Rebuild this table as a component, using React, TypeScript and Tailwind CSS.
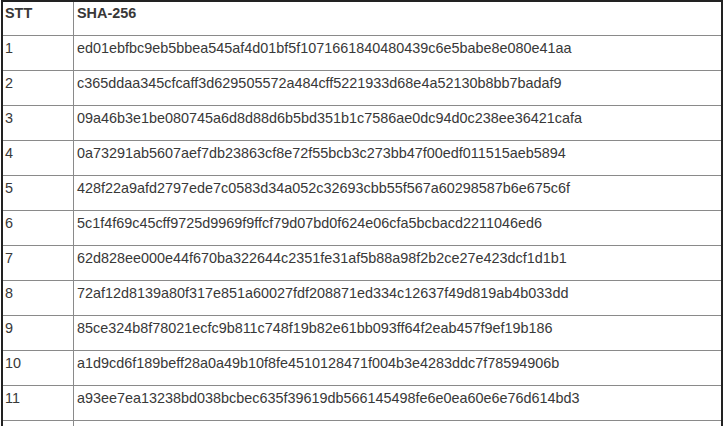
const rows: [string, string][] = [
  ['1', 'ed01ebfbc9eb5bbea545af4d01bf5f1071661840480439c6e5babe8e080e41aa'],
  ['2', 'c365ddaa345cfcaff3d629505572a484cff5221933d68e4a52130b8bb7badaf9'],
  ['3', '09a46b3e1be080745a6d8d88d6b5bd351b1c7586ae0dc94d0c238ee36421cafa'],
  ['4', '0a73291ab5607aef7db23863cf8e72f55bcb3c273bb47f00edf011515aeb5894'],
  ['5', '428f22a9afd2797ede7c0583d34a052c32693cbb55f567a60298587b6e675c6f'],
  ['6', '5c1f4f69c45cff9725d9969f9ffcf79d07bd0f624e06cfa5bcbacd2211046ed6'],
  ['7', '62d828ee000e44f670ba322644c2351fe31af5b88a98f2b2ce27e423dcf1d1b1'],
  ['8', '72af12d8139a80f317e851a60027fdf208871ed334c12637f49d819ab4b033dd'],
  ['9', '85ce324b8f78021ecfc9b811c748f19b82e61bb093ff64f2eab457f9ef19b186'],
  ['10', 'a1d9cd6f189beff28a0a49b10f8fe4510128471f004b3e4283ddc7f78594906b'],
  ['11', 'a93ee7ea13238bd038bcbec635f39619db566145498fe6e0ea60e6e76d614bd3'],
];

const App = () => {
  return (
    <div className="w-[724px] h-[426px] overflow-hidden bg-white font-['Liberation_Sans',Arial,sans-serif] text-[14.4px] leading-[16px] text-[#383838]">
      <div className="ml-px w-[722px] border-t-2 border-l-2 border-r-2 border-[#222]">
        <div className="grid grid-cols-[71px_1fr] h-[34px] border-b border-[#8a8a8a] font-bold">
          <div className="border-r border-[#8a8a8a] pl-[2px] pt-[3px]">STT</div>
          <div className="pl-[3px] pt-[3px]">SHA-256</div>
        </div>
        {rows.map(([n, hash]) => (
          <div key={n} className="grid grid-cols-[71px_1fr] h-[35px] border-b border-[#8a8a8a]">
            <div className="border-r border-[#8a8a8a] pl-[2px] pt-[4px]">{n}</div>
            <div className="pl-[3px] pt-[4px]">{hash}</div>
          </div>
        ))}
        {/* next row, cut off by the screenshot */}
        <div className="grid grid-cols-[71px_1fr] h-[35px]">
          <div className="border-r border-[#8a8a8a]" />
          <div />
        </div>
      </div>
    </div>
  );
};

export default App;
